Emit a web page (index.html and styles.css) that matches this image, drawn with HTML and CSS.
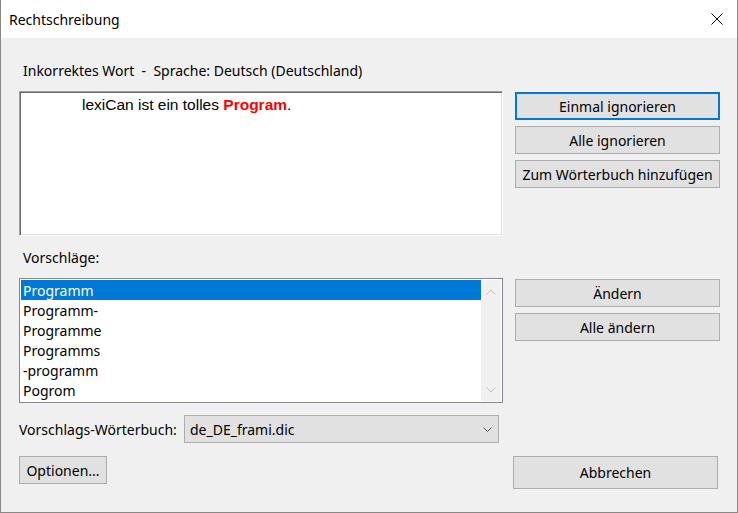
FILE: index.html
```html
<!DOCTYPE html>
<html lang="de">
<head>
    <meta charset="UTF-8">
    <title>Rechtschreibung</title>
    <link rel="stylesheet" href="styles.css">
</head>
<body>
    <div id="dialog">
        <div id="titlebar">
            <span id="title">Rechtschreibung</span>
            <svg id="close" width="12" height="12" viewBox="0 0 12 12">
                <path d="M0.5 0.5 L11.5 11.5 M11.5 0.5 L0.5 11.5" stroke="#000" stroke-width="1" fill="none"/>
            </svg>
        </div>
        <div id="content">
            <div class="section">
                <div class="left">
                    <div class="label">Inkorrektes Wort &nbsp;- &nbsp;Sprache: Deutsch (Deutschland)</div>
                    <div id="sentence">lexiCan ist ein tolles <b>Program</b>.</div>
                </div>
                <div class="right first">
                    <button class="btn default">Einmal ignorieren</button>
                    <button class="btn">Alle ignorieren</button>
                    <button class="btn">Zum Wörterbuch hinzufügen</button>
                </div>
            </div>

            <div class="label suggest-label">Vorschläge:</div>
            <div class="section">
                <div class="left">
                    <div id="suggestions">
                        <div class="rows">
                            <div class="row selected">Programm</div>
                            <div class="row">Programm-</div>
                            <div class="row">Programme</div>
                            <div class="row">Programms</div>
                            <div class="row">-programm</div>
                            <div class="row">Pogrom</div>
                        </div>
                        <div class="scrollbar">
                            <svg width="10" height="6" viewBox="0 0 10 6"><path d="M0.5 5.5 L5 1 L9.5 5.5" stroke="#c2c2c2" fill="none"/></svg>
                            <svg width="10" height="6" viewBox="0 0 10 6"><path d="M0.5 0.5 L5 5 L9.5 0.5" stroke="#c2c2c2" fill="none"/></svg>
                        </div>
                    </div>
                </div>
                <div class="right second">
                    <button class="btn">Ändern</button>
                    <button class="btn">Alle ändern</button>
                </div>
            </div>

            <div id="dict-row">
                <span class="dict-label">Vorschlags-Wörterbuch:</span>
                <div id="combo">
                    <span>de_DE_frami.dic</span>
                    <svg width="9" height="5" viewBox="0 0 9 5"><path d="M0.5 0.5 L4.5 4.5 L8.5 0.5" stroke="#555" fill="none"/></svg>
                </div>
            </div>

            <div id="bottom-row">
                <button class="btn options">Optionen...</button>
                <button class="btn cancel">Abbrechen</button>
            </div>
        </div>
    </div>
</body>
</html>
```

FILE: styles.css
```css
body {
    margin: 0;
    padding: 0;
    font-family: "Noto Sans", "Open Sans", sans-serif;
    font-size: 14px;
    color: #000;
}
#dialog {
    width: 738px;
    height: 513px;
    box-sizing: border-box;
    border: 1px solid #888888;
    border-top: none;
    background-color: #f0f0f0;
}
#titlebar {
    height: 38px;
    background-color: #ffffff;
    display: flex;
    justify-content: space-between;
    align-items: center;
    padding: 0 14px 0 8px;
}
#title {
    font-size: 14px;
}
#close {
    display: block;
}
#content {
    padding: 0 16px 0 18px;
}
.section {
    display: grid;
    grid-template-columns: 484px 205px;
    column-gap: 12px;
}
.label {
    height: 18px;
    line-height: 18px;
    margin-left: 4px;
}
.left .label {
    margin-top: 24px;
}
#sentence {
    margin-top: 11px;
    height: 145px;
    box-sizing: border-box;
    background-color: #ffffff;
    border-top: 1px solid #a0a0a0;
    border-left: 1px solid #a0a0a0;
    border-right: 1px solid #ffffff;
    border-bottom: 1px solid #ffffff;
    box-shadow: inset 1px 1px 0 #696969, inset -1px -1px 0 #e3e3e3;
    padding: 3px 0 0 62px;
    font-family: "Liberation Sans", Arial, sans-serif;
    font-size: 15.5px;
    line-height: 20px;
}
#sentence b {
    color: #ff0000;
}
.right {
    display: flex;
    flex-direction: column;
    gap: 6px;
}
.right.first {
    margin-top: 54px;
}
.right.second {
    margin-top: 12px;
}
.btn {
    font-family: inherit;
    font-size: 14px;
    color: #000;
    height: 28px;
    box-sizing: border-box;
    background-color: #e1e1e1;
    border: 1px solid #adadad;
    padding: 0;
    margin: 0;
}
.btn.default {
    border: 2px solid #0078d7;
}
.suggest-label {
    margin-top: 13px;
}
#suggestions {
    margin-top: 11px;
    height: 125px;
    box-sizing: border-box;
    border: 1px solid #828790;
    background-color: #ffffff;
    padding: 1px;
    display: flex;
}
.rows {
    flex: 1;
}
.row {
    height: 20px;
    line-height: 21px;
    padding-left: 2px;
}
.row.selected {
    background-color: #0078d7;
    color: #ffffff;
}
.scrollbar {
    width: 20px;
    background-color: #f0f0f0;
    display: flex;
    flex-direction: column;
    justify-content: space-between;
    align-items: center;
    padding: 9px 0 8px;
    box-sizing: border-box;
}
.scrollbar svg {
    display: block;
}
#dict-row {
    margin-top: 12px;
    display: flex;
    align-items: center;
    height: 28px;
}
.dict-label {
    width: 165px;
}
#combo {
    width: 315px;
    height: 28px;
    box-sizing: border-box;
    background-color: #e1e1e1;
    border: 1px solid #adadad;
    display: flex;
    align-items: center;
    justify-content: space-between;
    padding: 0 6px 0 5px;
}
#bottom-row {
    margin-top: 13px;
    display: flex;
    justify-content: space-between;
    align-items: flex-start;
    padding-right: 3px;
}
.btn.options {
    width: 88px;
}
.btn.cancel {
    width: 205px;
    height: 33px;
}
```
